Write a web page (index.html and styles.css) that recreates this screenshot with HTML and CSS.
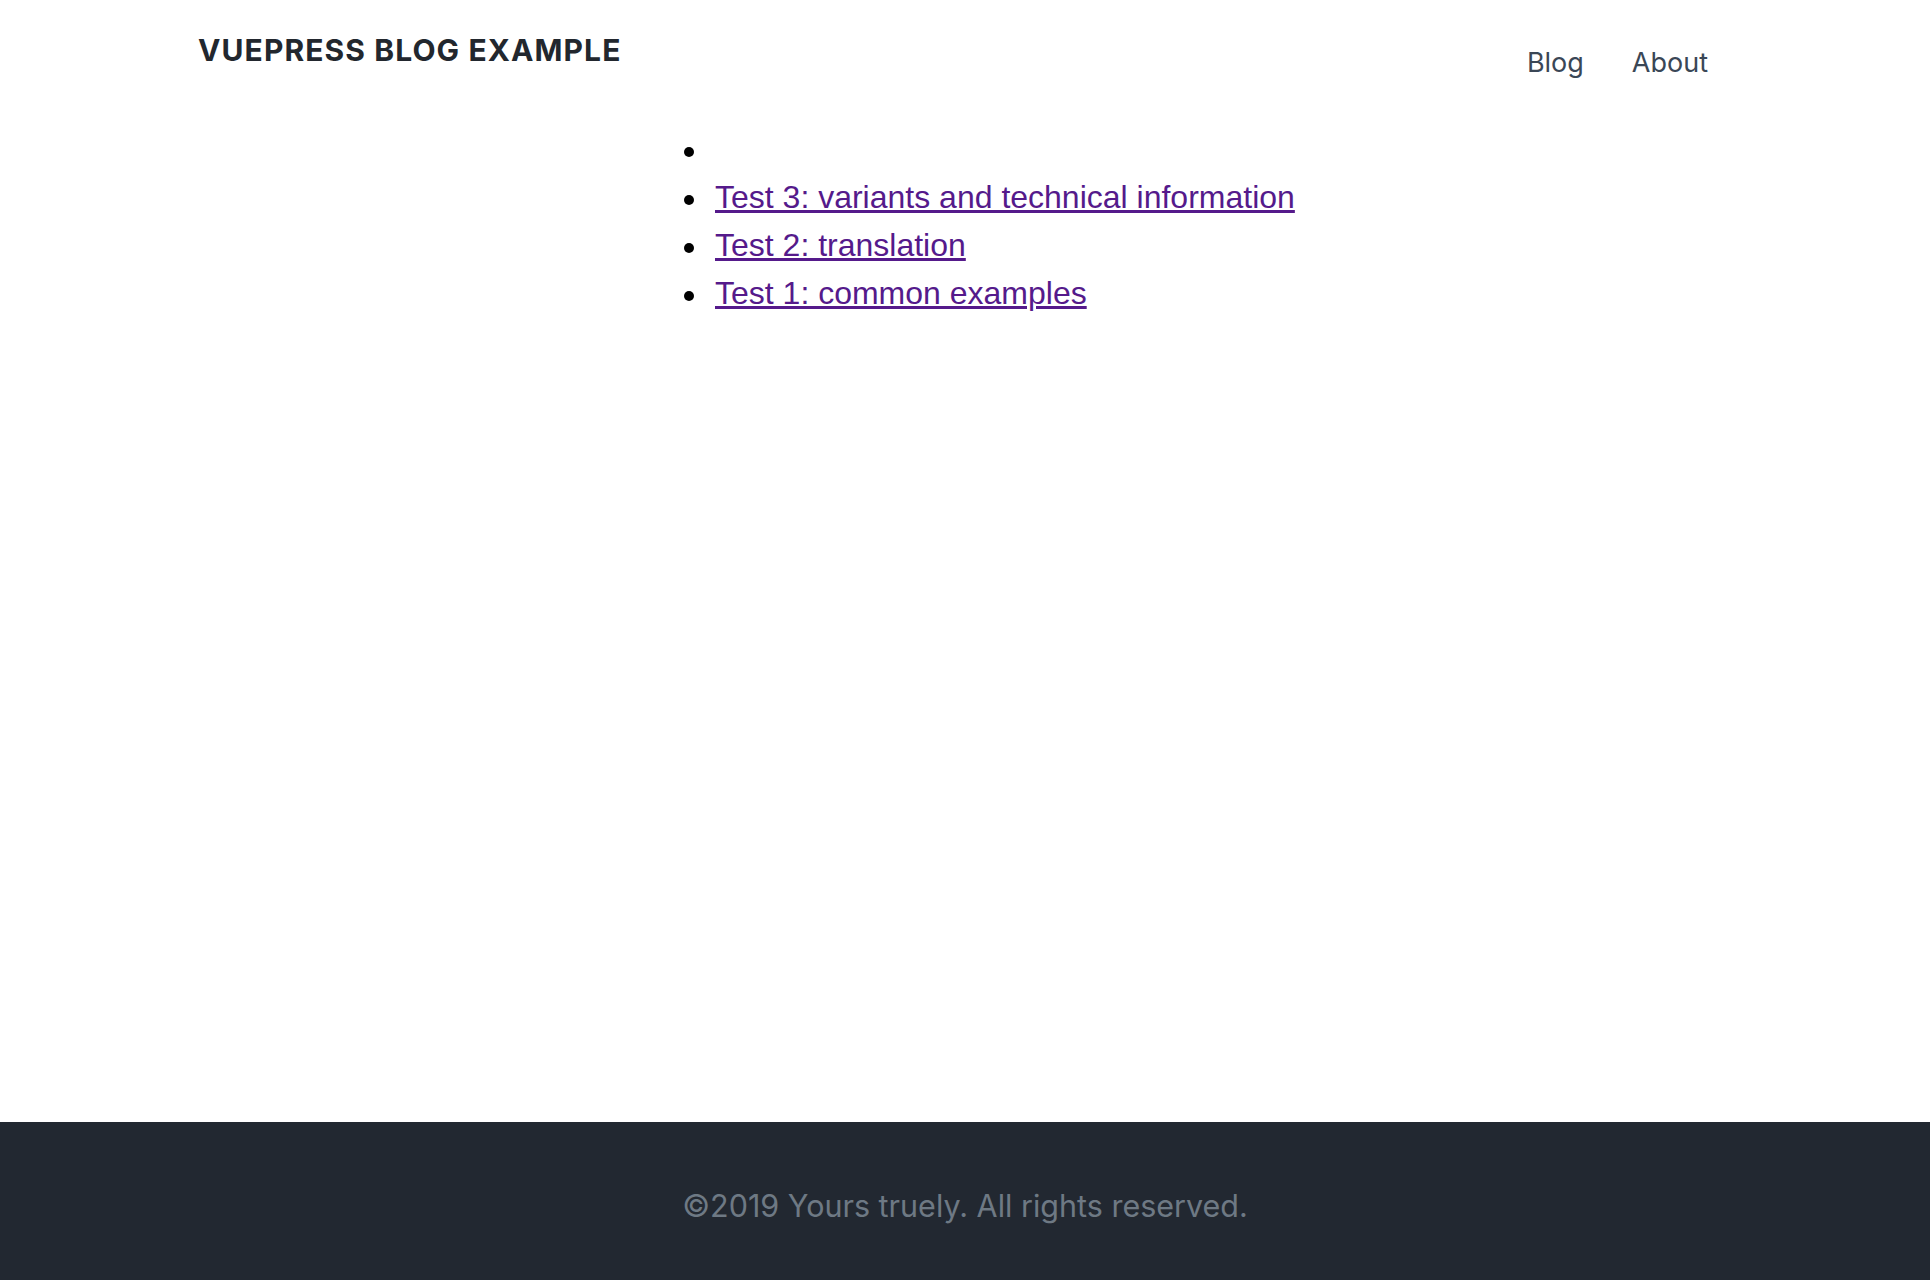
FILE: index.html
```html
<!DOCTYPE html>
<html>
<head>
<meta charset="utf-8">
<link rel="stylesheet" href="styles.css">
</head>
<body>
<div class="page">
  <header class="header">
    <div class="brand">VUEPRESS BLOG EXAMPLE</div>
    <nav class="nav">
      <a class="nav-link" href="#">Blog</a>
      <a class="nav-link" href="#">About</a>
    </nav>
  </header>
  <main class="content">
    <ul class="posts">
      <li class="post"></li>
      <li class="post"><a class="post-link" href="#">Test 3: variants and technical information</a></li>
      <li class="post"><a class="post-link" href="#">Test 2: translation</a></li>
      <li class="post"><a class="post-link" href="#">Test 1: common examples</a></li>
    </ul>
  </main>
  <footer class="footer">
    <p class="footer-text">©2019 Yours truely. All rights reserved.</p>
  </footer>
</div>
</body>
</html>
```
FILE: styles.css
```css
html, body {
  margin: 0;
  padding: 0;
  background: #ffffff;
}
.page {
  display: flex;
  flex-direction: column;
  min-height: 1280px;
}
.header {
  display: flex;
  justify-content: space-between;
  align-items: flex-start;
  padding: 0 222px 0 198px;
  font-family: Inter, "Noto Sans", sans-serif;
}
.brand {
  margin-top: 30px;
  font-size: 30px;
  line-height: 40px;
  font-weight: 700;
  color: #22272e;
  letter-spacing: 1.1px;
}
.nav {
  display: flex;
  gap: 48px;
  margin-top: 43px;
}
.nav-link {
  font-size: 27px;
  line-height: 40px;
  color: #3a4756;
  text-decoration: none;
}
.content {
  flex: 1;
  padding-left: 675px;
}
.posts {
  margin: 42px 0 0 0;
  padding-left: 40px;
  list-style: none;
  font-family: "Liberation Sans", Arial, sans-serif;
  font-size: 32px;
  line-height: 48px;
  color: #000;
}
.post {
  position: relative;
  min-height: 48px;
}
.post::before {
  content: "";
  position: absolute;
  left: -31px;
  top: 22px;
  width: 10px;
  height: 10px;
  border-radius: 50%;
  background: #000;
}
.post-link {
  color: #551a8b;
  text-decoration: underline;
}
.footer {
  background: #222831;
  height: 158px;
  display: flex;
  align-items: center;
  justify-content: center;
  padding-top: 8px;
  box-sizing: border-box;
}
.footer-text {
  margin: 0;
  font-family: Inter, "Noto Sans", sans-serif;
  font-size: 30.5px;
  color: #6e7984;
}
```
